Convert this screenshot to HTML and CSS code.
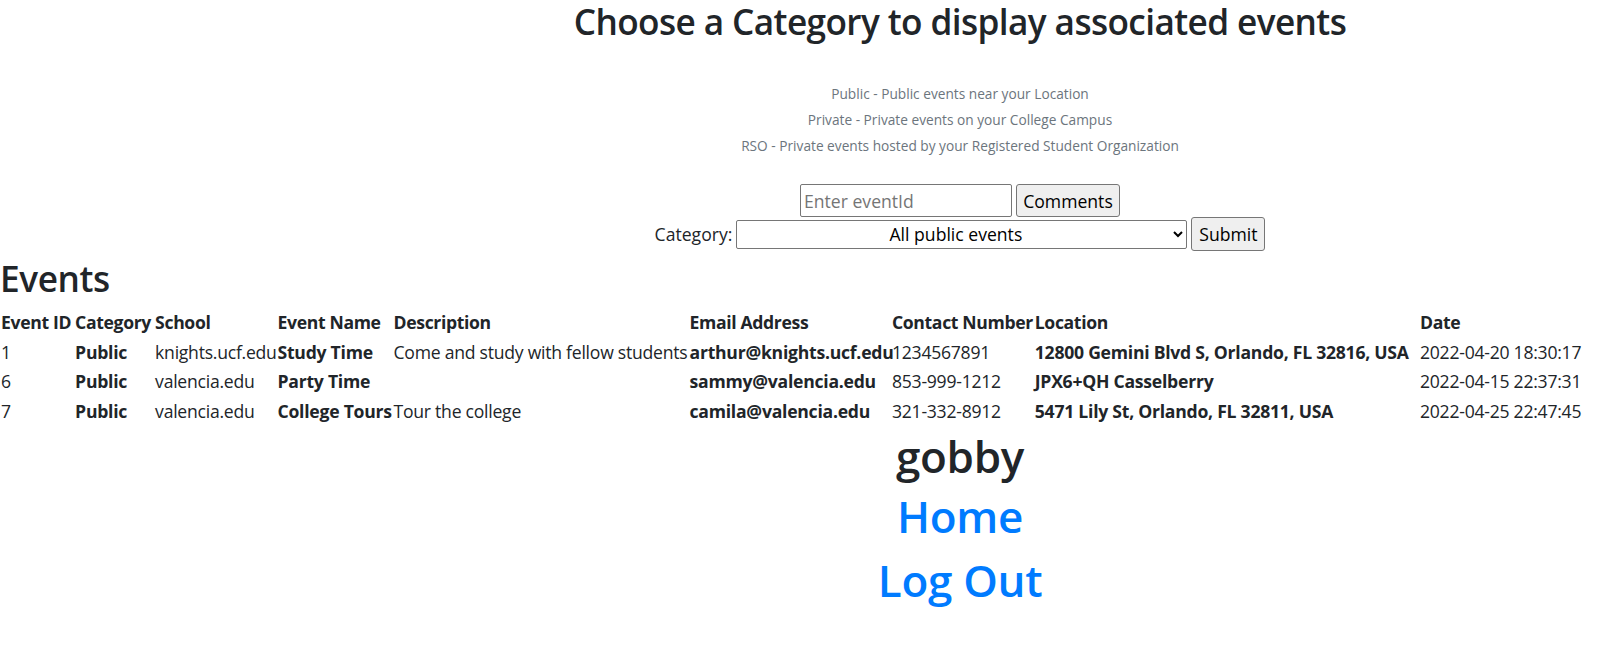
FILE: index.html
```html
<!DOCTYPE html>
<html lang="en">
<head>
<meta charset="utf-8">
<title>Events</title>
<link rel="stylesheet" href="styles.css">
</head>
<body>
<div class="page">
  <section class="intro">
    <h2 class="title">Choose a Category to display associated events</h2>
    <div class="legend">
      <div class="legend-line">Public - Public events near your Location</div>
      <div class="legend-line">Private - Private events on your College Campus</div>
      <div class="legend-line">RSO - Private events hosted by your Registered Student Organization</div>
    </div>
    <form class="form-row">
      <input class="field" type="text" placeholder="Enter eventId">
      <button class="btn btn-comments" type="button">Comments</button>
    </form>
    <form class="form-row">
      <label class="label" for="cat">Category:</label>
      <select class="select" id="cat">
        <option>All public events</option>
        <option>Private events</option>
        <option>RSO events</option>
      </select>
      <button class="btn btn-submit" type="button">Submit</button>
    </form>
  </section>

  <h2 class="events-title">Events</h2>
  <table class="events">
    <colgroup>
      <col class="c-id"><col class="c-cat"><col class="c-school"><col class="c-name"><col class="c-desc"><col class="c-email"><col class="c-phone"><col class="c-loc"><col class="c-date">
    </colgroup>
    <thead>
      <tr>
        <th>Event ID</th><th>Category</th><th>School</th><th>Event Name</th><th>Description</th><th>Email Address</th><th>Contact Number</th><th>Location</th><th>Date</th>
      </tr>
    </thead>
    <tbody>
      <tr>
        <td>1</td><td class="b">Public</td><td>knights.ucf.edu</td><td class="b">Study Time</td><td>Come and study with fellow students</td><td class="b">arthur@knights.ucf.edu</td><td>1234567891</td><td class="b">12800 Gemini Blvd S, Orlando, FL 32816, USA</td><td>2022-04-20 18:30:17</td>
      </tr>
      <tr>
        <td>6</td><td class="b">Public</td><td>valencia.edu</td><td class="b">Party Time</td><td></td><td class="b">sammy@valencia.edu</td><td>853-999-1212</td><td class="b">JPX6+QH Casselberry</td><td>2022-04-15 22:37:31</td>
      </tr>
      <tr>
        <td>7</td><td class="b">Public</td><td>valencia.edu</td><td class="b">College Tours</td><td>Tour the college</td><td class="b">camila@valencia.edu</td><td>321-332-8912</td><td class="b">5471 Lily St, Orlando, FL 32811, USA</td><td>2022-04-25 22:47:45</td>
      </tr>
    </tbody>
  </table>

  <section class="footer">
    <h1 class="user">gobby</h1>
    <h1 class="nav-item nav-home"><a class="link" href="#">Home</a></h1>
    <h1 class="nav-item"><a class="link" href="#">Log Out</a></h1>
  </section>
</div>
</body>
</html>
```
FILE: styles.css
```css
html, body {
  margin: 0;
  padding: 0;
}
body {
  overflow-x: hidden;
  font-family: "Open Sans", "Noto Sans", sans-serif;
  font-size: 17.6px;
  line-height: 1.5;
  color: #212529;
  background: #fff;
}
.page {
  width: 1611px;
}
.intro,
.footer {
  box-sizing: border-box;
  width: 1611px;
  padding-left: 309px;
  text-align: center;
}
.title {
  margin: 0 0 8.8px;
  font-size: 35.2px;
  font-weight: 600;
  letter-spacing: -0.6px;
  line-height: 1.2;
}
.legend {
  padding-top: 30px;
  margin-bottom: 26px;
}
.legend-line {
  font-size: 13.7px;
  line-height: 25.8px;
  color: #6c757d;
}
.form-row {
  display: flex;
  justify-content: center;
  align-items: center;
  gap: 4px;
  margin: 0;
}
.field {
  box-sizing: border-box;
  width: 212px;
  height: 33px;
  padding: 1px 3px;
  border: 1px solid #767676;
  border-radius: 2px;
  font: inherit;
  color: #212529;
  background: #fff;
}
.field::placeholder {
  color: #757575;
}
.btn {
  box-sizing: border-box;
  height: 33px;
  padding: 1px 6px;
  border: 1px solid #767676;
  border-radius: 3px;
  background: #efefef;
  font: inherit;
  color: #000;
}
.btn-comments {
  width: 104px;
}
.btn-submit {
  width: 74px;
  height: 34px;
}
.label {
  font-size: 17.6px;
}
.select {
  box-sizing: border-box;
  width: 451px;
  height: 29px;
  padding: 0 4px;
  border: 1px solid #767676;
  border-radius: 2px;
  background-color: #fff;
  font: inherit;
  line-height: normal;
  color: #000;
  text-align: center;
  text-align-last: center;
}
.events-title {
  margin: 5.5px 0 8px;
  font-size: 35.2px;
  font-weight: 600;
  letter-spacing: -0.4px;
  line-height: 1.2;
}
.events {
  border-collapse: collapse;
  table-layout: fixed;
  width: 1584px;
}
.events th,
.events td {
  padding: 1.7px 1.1px;
  text-align: left;
  white-space: nowrap;
  overflow: visible;
}
.events th {
  font-weight: 700;
  letter-spacing: -0.35px;
}
.events td {
  font-weight: 400;
  letter-spacing: -0.25px;
}
.events td.b {
  font-weight: 700;
  letter-spacing: -0.25px;
}
.c-id { width: 74px; }
.c-cat { width: 80px; }
.c-school { width: 122.4px; }
.c-name { width: 116px; }
.c-desc { width: 296px; }
.c-email { width: 202.4px; }
.c-phone { width: 142.8px; }
.c-loc { width: 385.2px; }
.c-date { width: 165px; }
.footer {
  padding-top: 4px;
}
.user {
  margin: 0 0 7px;
  font-size: 44px;
  font-weight: 600;
  letter-spacing: -0.3px;
  line-height: 1.2;
}
.nav-item {
  margin: 0 0 8.8px;
  font-size: 44px;
  font-weight: 600;
  letter-spacing: -0.3px;
  line-height: 1.2;
}
.nav-home {
  margin-bottom: 11px;
}
.link {
  color: #007bff;
  text-decoration: none;
}
```
